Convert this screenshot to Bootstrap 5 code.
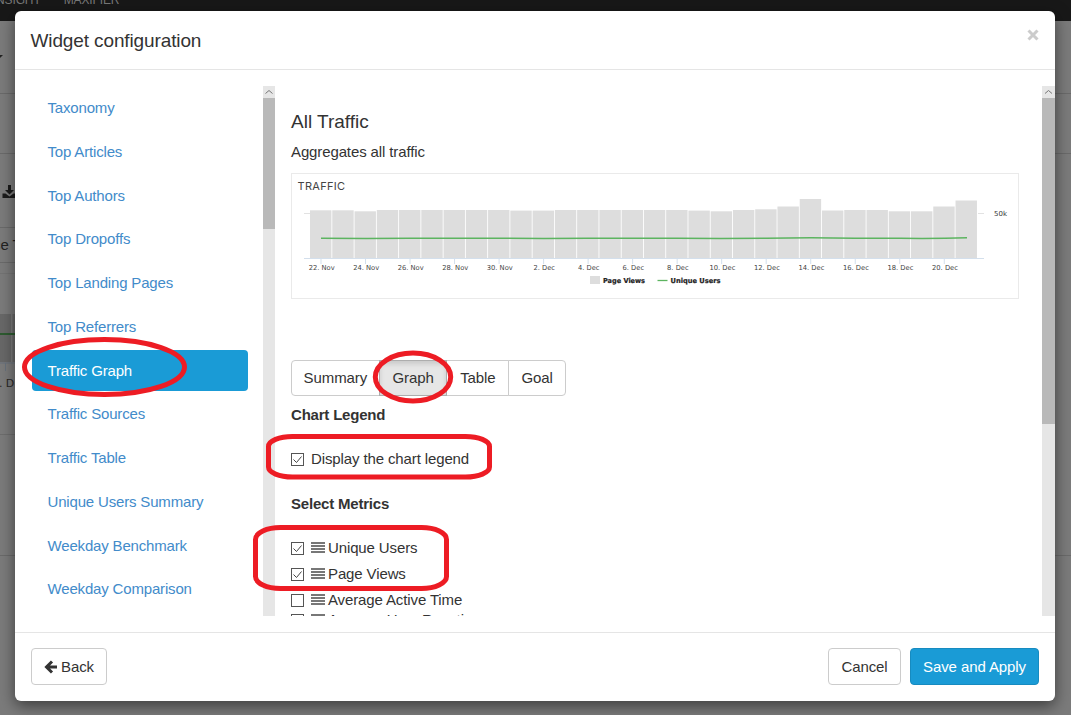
<!DOCTYPE html>
<html lang="en">
<head>
<meta charset="utf-8">
<title>Widget configuration</title>
<link href="https://cdn.jsdelivr.net/npm/bootstrap@5.3.0/dist/css/bootstrap.min.css" rel="stylesheet">
<style>
body{margin:0;background:#fff;color:#333;font:15px/21.43px "Liberation Sans",Arial,sans-serif;letter-spacing:-.12px;overflow:hidden}
.page-frame{width:1071px;height:715px;background:#7b7b7b;overflow:hidden}
.topnav{height:21px;background:#181818;color:#777;font-size:12px;line-height:12px;overflow:hidden;white-space:pre}
.topnav span{margin-top:-6px}
.strip{border-bottom:1px solid #6a6a6a;color:#222;overflow:hidden;white-space:nowrap}
.dialog-box{left:15px;top:11px;width:1040px;height:690px;background:#fff;border-radius:6px;box-shadow:0 5px 15px rgba(0,0,0,.5)}
.dialog-head{height:59px;border-bottom:1px solid #e5e5e5;padding:18px 16px 0 15.5px}
.dialog-head h4{font-size:19px;line-height:24px;font-weight:400;margin:0}
.dialog-main{height:562px;padding-top:16px}
.dialog-foot{height:69px;border-top:1px solid #e5e5e5;padding:0 16px 2px}
.pane{height:530px;overflow:hidden}
.side-pane{width:248px}
.side-pane .nav{width:216px;margin:1px 0 0 17px;gap:2px;flex-wrap:nowrap;letter-spacing:-.17px}
.side-pane .nav-link{height:41.75px;padding:10px 15.5px;color:#428bca;line-height:21.43px;border-radius:4px}
.side-pane .nav-link.active{background:#1a9bd6;color:#fff}
.track{width:12px;background:#e6e6e6;height:530px}
.track.wide{width:13px}
.track svg{display:block;height:12px;width:12px}
.thumb{background:#b9b9b9}
.main-pane{padding:25px 0 0 16px}
.main-pane h4{font-size:19px;line-height:22px;font-weight:400;margin:0 0 9px;letter-spacing:0}
.preview{width:728px;height:126px;border:1px solid #eaeaea;margin:11px 0 61px;letter-spacing:0}
.preview svg{display:block}
.btn{--bs-btn-font-size:15px;--bs-btn-line-height:21.43px;--bs-btn-border-radius:4px;font-family:inherit;letter-spacing:-.1px}
.btn-plain{--bs-btn-color:#333;--bs-btn-border-color:#ccc;--bs-btn-bg:#fff;--bs-btn-active-color:#333;--bs-btn-active-bg:#e6e6e6;--bs-btn-active-border-color:#adadad;--bs-btn-active-shadow:inset 0 3px 5px rgba(0,0,0,.125)}
.btn-plain.active{box-shadow:inset 0 3px 5px rgba(0,0,0,.125)}
.btn-apply{--bs-btn-color:#fff;--bs-btn-bg:#1a9bd6;--bs-btn-border-color:#178bc0}
.dialog-foot .btn{height:37px;padding:7.5px 12px 6.5px}
.tabs .btn{height:36px;padding:5.5px 0 7.5px}
.heading{font-weight:700;line-height:21px;letter-spacing:-.2px}
.opt{height:26px;line-height:26px;white-space:nowrap}
.box{width:13px;height:13px;border:1px solid #555;background:#fff}
.box svg{display:block}
.bars{width:14px;height:12px;margin:0 3px 0 7px}
.marks{left:0;top:0;z-index:10;pointer-events:none}
</style>
</head>
<body>
<div class="page-frame position-relative">
  <div class="topnav d-flex"><span style="margin-left:-4px">NSIGHT</span><span style="margin-left:23px">MAXIFIER</span></div>
  <div class="strip" style="height:73px"><svg width="8" height="8" style="display:block;margin-top:33px"><path d="M-4 1H3L-1 5z" fill="#222"/></svg></div>
  <div class="strip" style="height:60px"></div>
  <div class="d-flex">
    <div style="width:15px;height:562px">
      <div class="strip" style="height:74px"><svg width="15" height="16" viewBox="0 0 15 16" style="display:block;margin-top:30px"><path d="M8 1h3v5h3l-4.500 4.500L5 6h3zM2.500 9.500h3l4 3 4-3H15V14H2.500z" fill="#1b1b1b"/></svg></div>
      <div class="strip" style="height:35px;line-height:34px;text-indent:-7px">ce T</div>
      <div class="strip" style="height:11px;border-color:#737373"></div>
      <div style="height:40px"></div>
      <svg width="15" height="75" style="display:block"><path d="M0 0h11v48H0zM12.500 0H15v48h-2.500z" fill="#686868"/><path d="M0 20H15" stroke="#2d5b30" stroke-width="2"/><path d="M0 49H15M5.500 49v8" stroke="#68717c"/><text x="-1" y="73" font-size="11" fill="#292929" font-family="DejaVu Sans, sans-serif">. D</text></svg>
      <div class="strip" style="height:46px;border-color:#6d6d6d"></div>
      <div class="strip" style="height:121px"></div>
    </div>
    <div class="ms-auto" style="width:16px"><div class="strip" style="height:402px"></div></div>
  </div>

  <div class="dialog-box position-absolute d-flex flex-column">
    <div class="dialog-head d-flex justify-content-between">
      <h4>Widget configuration</h4>
      <svg width="12" height="12" viewBox="0 0 12 12"><path d="M1.500 1.500l9 9M10.500 1.500l-9 9" stroke="#ccc" stroke-width="3"/></svg>
    </div>
    <div class="dialog-main d-flex">
      <div class="pane side-pane">
        <nav class="nav nav-pills flex-column">
          <a class="nav-link">Taxonomy</a>
          <a class="nav-link">Top Articles</a>
          <a class="nav-link">Top Authors</a>
          <a class="nav-link">Top Dropoffs</a>
          <a class="nav-link">Top Landing Pages</a>
          <a class="nav-link">Top Referrers</a>
          <a class="nav-link active">Traffic Graph</a>
          <a class="nav-link">Traffic Sources</a>
          <a class="nav-link">Traffic Table</a>
          <a class="nav-link">Unique Users Summary</a>
          <a class="nav-link">Weekday Benchmark</a>
          <a class="nav-link">Weekday Comparison</a>
        </nav>
      </div>
      <div class="track"><svg viewBox="0 0 12 12"><path d="M2.500 7.500L6 4.500l3.500 3" fill="none" stroke="#777"/></svg><div class="thumb" style="height:131px"></div></div>
      <div class="pane main-pane flex-grow-1">
        <h4>All Traffic</h4>
        <div style="line-height:20px">Aggregates all traffic</div>
        <div class="preview" style="margin-top:11px">
          <svg id="chart" width="726" height="124" viewBox="292 174 726 124">
            <text x="297.500" y="190" font-family="Inter, sans-serif" font-size="11" fill="#444" textLength="47.500">TRAFFIC</text>
            <path d="M304 213.500H310M978 213.500h6" stroke="#e2e2e2"/>
            <g id="barsGroup" fill="#ddd"></g>
            <path d="M304 258.500H984" stroke="#d3dfec"/>
            <path d="M321 238.200L366 238.500 410 238.200H500L544 238.400 588 238.200H677L721 238.500 766 238.200 811 237.800 855 238.200H900L922 238.500 945 238.200 967 237.700" fill="none" stroke="#5cb460" stroke-width="1.500"/>
            <g id="labels" font-family="DejaVu Sans, sans-serif" font-size="6.800" fill="#444" text-anchor="middle"></g>
            <text x="994" y="216" font-family="DejaVu Sans, sans-serif" font-size="6.800" fill="#333" textLength="13" lengthAdjust="spacingAndGlyphs">50k</text>
            <rect x="590" y="276" width="10" height="8" fill="#ddd"/>
            <path d="M657.500 280.500h10" stroke="#5cb460" stroke-width="1.300"/>
            <g font-family="DejaVu Sans, sans-serif" font-size="6.800" font-weight="700" fill="#222" stroke="#222" stroke-width=".2">
              <text x="603" y="283" textLength="42" lengthAdjust="spacingAndGlyphs">Page Views</text>
              <text x="670.500" y="283" textLength="50" lengthAdjust="spacingAndGlyphs">Unique Users</text>
            </g>
          </svg>
        </div>
        <div class="btn-group tabs d-flex" style="width:275px">
          <button class="btn btn-plain flex-grow-0" style="width:89px">Summary</button>
          <button class="btn btn-plain active flex-grow-0" style="width:69px">Graph</button>
          <button class="btn btn-plain flex-grow-0" style="width:63px">Table</button>
          <button class="btn btn-plain flex-grow-0" style="width:58px">Goal</button>
        </div>
        <div class="heading" style="margin-top:8px">Chart Legend</div>
        <div class="opt d-flex align-items-center" style="margin-top:21px"><span class="box"><svg width="11" height="11"><path d="M1.500 5.500l3 3 5-6" fill="none" stroke="#444"/></svg></span><span style="margin-left:7px">Display the chart legend</span></div>
        <div class="heading" style="margin-top:21px">Select Metrics</div>
        <div style="margin-top:21px" id="metrics">
          <div class="opt d-flex align-items-center"><span class="box"><svg width="11" height="11"><path d="M1.500 5.500l3 3 5-6" fill="none" stroke="#444"/></svg></span><svg class="bars"><path d="M0 1h14M0 4h14M0 7h14M0 10h14" stroke="#777" stroke-width="2"/></svg>Unique Users</div>
          <div class="opt d-flex align-items-center"><span class="box"><svg width="11" height="11"><path d="M1.500 5.500l3 3 5-6" fill="none" stroke="#444"/></svg></span><svg class="bars"><path d="M0 1h14M0 4h14M0 7h14M0 10h14" stroke="#777" stroke-width="2"/></svg>Page Views</div>
          <div class="opt d-flex align-items-center"><span class="box"></span><svg class="bars"><path d="M0 1h14M0 4h14M0 7h14M0 10h14" stroke="#777" stroke-width="2"/></svg>Average Active Time</div>
          <div class="opt d-flex align-items-center" style="margin-top:-6px"><span class="box"></span><svg class="bars"><path d="M0 1h14M0 4h14M0 7h14M0 10h14" stroke="#777" stroke-width="2"/></svg>Average User Reaction</div>
        </div>
      </div>
      <div class="track wide"><svg viewBox="0 0 12 12"><path d="M3 7.500l3.500-3 3.500 3" fill="none" stroke="#777"/></svg><div class="thumb" style="height:326px"></div></div>
    </div>
    <div class="dialog-foot d-flex align-items-center">
      <button class="btn btn-plain me-auto d-flex align-items-center" style="width:76px"><svg width="13" height="14" viewBox="0 0 13 14" style="margin-right:4px;flex:none"><path d="M8 1.500L2.500 7 8 12.500M3 7h10" fill="none" stroke="#333" stroke-width="3"/></svg>Back</button>
      <button class="btn btn-plain px-0" style="width:73px;margin-right:9px">Cancel</button>
      <button class="btn btn-apply px-0" style="width:129px">Save and Apply</button>
    </div>
  </div>

  <svg class="marks position-absolute" width="1071" height="715" fill="none" stroke="#ed1c24" stroke-width="5">
    <ellipse cx="104.500" cy="367" rx="80" ry="27.500"/>
    <ellipse cx="413" cy="377" rx="37.700" ry="24"/>
    <rect x="268.500" y="436.500" width="221" height="40.500" rx="24" ry="10"/>
    <rect x="255.500" y="527.500" width="191" height="61" rx="25" ry="12"/>
  </svg>
</div>
<script>
const NS="http://www.w3.org/2000/svg";
const tops=[210.3,210.3,211.3,210,210,210,210,210,210,210.6,210.6,210,210,210,210,210,210,210.6,211.3,210,209.3,206.5,199,210.5,210,210,211.3,211.3,206.5,200.5];
const bars=document.getElementById("barsGroup"),labels=document.getElementById("labels");
function add(parent,tag,attrs,text){const e=document.createElementNS(NS,tag);for(const k in attrs)e.setAttribute(k,attrs[k]);if(text)e.textContent=text;parent.appendChild(e)}
tops.forEach((t,i)=>{
  const x=310+i*22.26;
  add(bars,"rect",{x:x,y:t,width:21.4,height:258-t});
  if(i%2===0){
    const day=22+i,text=day>30?(day-30)+". Dec":day+". Nov",w=day>30&&day<40?21.5:26;
    add(labels,"path",{d:"M"+(x+11)+" 259v5",stroke:"#d3dfec"});
    add(labels,"text",{x:x+11.7,y:270,textLength:w,lengthAdjust:"spacingAndGlyphs"},text);
  }
});
</script>
<script src="https://cdn.jsdelivr.net/npm/bootstrap@5.3.0/dist/js/bootstrap.bundle.min.js"></script>
</body>
</html>
